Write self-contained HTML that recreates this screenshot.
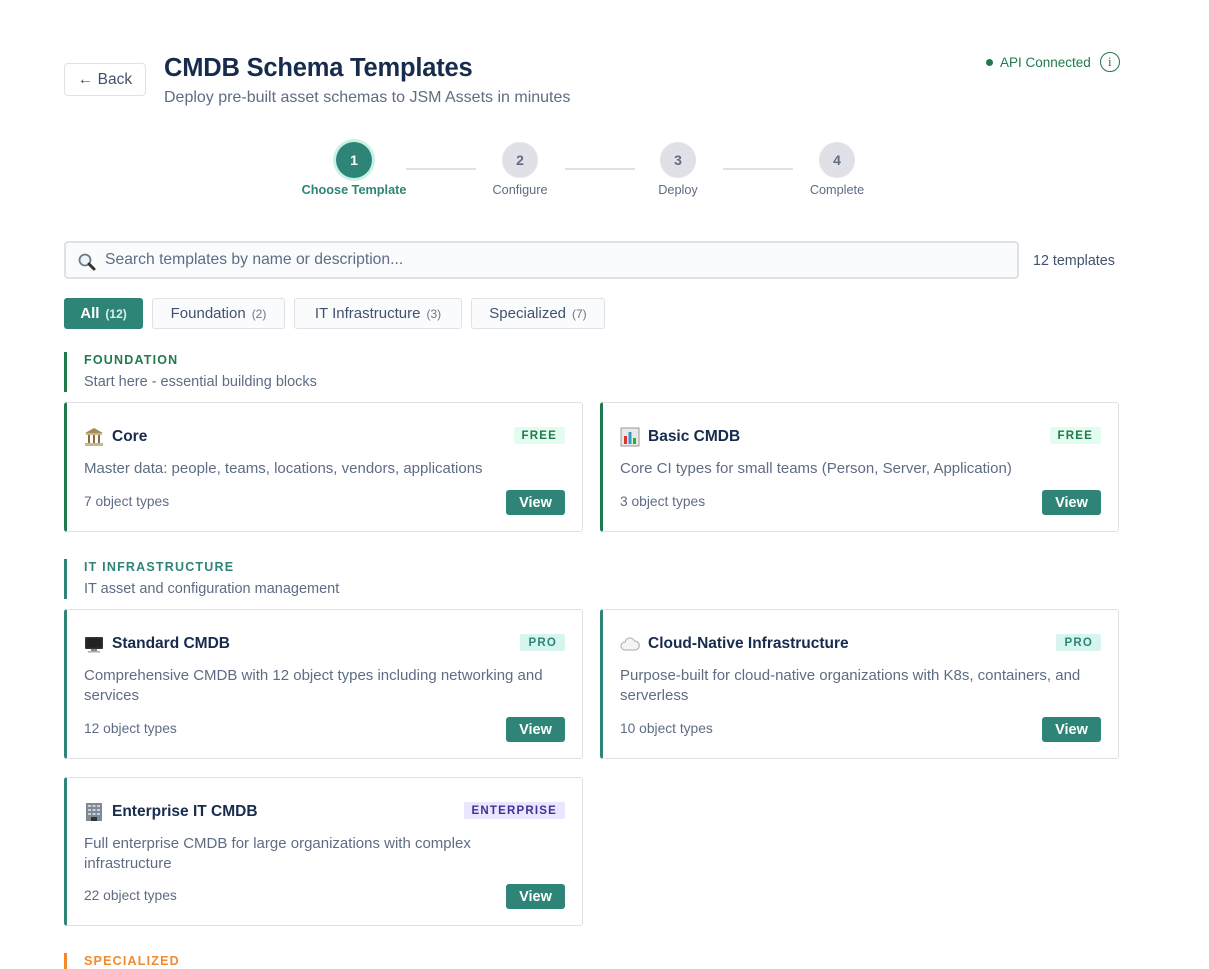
<!DOCTYPE html>
<html><head><meta charset="utf-8"><style>
*{box-sizing:border-box;margin:0;padding:0}
body{width:1209px;height:968px;overflow:hidden;background:#fff;font-family:"Liberation Sans",sans-serif;color:#172b4d;position:relative}
.abs{position:absolute}
.back{left:64px;top:63px;width:82px;height:33px;border:1px solid #dfe1e6;border-radius:4px;font-size:15.5px;color:#42526e;display:flex;align-items:center;justify-content:center}
h1{position:absolute;left:164px;top:54px;font-size:25.5px;font-weight:bold;color:#172b4d;letter-spacing:-0.2px}
.sub{left:164px;top:89px;font-size:16px;color:#5e6c84}
.api{left:986px;top:52px;font-size:13.5px;color:#1f7a4d;display:flex;align-items:center;gap:7px}
.dot{width:7px;height:7px;border-radius:50%;background:#1f7a4d}
.info{width:20px;height:20px;border:1.3px solid #1f7a4d;border-radius:50%;font-size:13px;display:flex;align-items:center;justify-content:center;margin-left:2px;font-family:"Liberation Serif",serif}
.step{position:absolute;top:142px;width:36px;height:36px;border-radius:50%;background:#dfe1e6;color:#5e6c84;font-size:14px;font-weight:bold;display:flex;align-items:center;justify-content:center}
.step.on{background:#2e8577;color:#fff;box-shadow:0 0 0 3px #c9f2e6}
.sl{position:absolute;top:183px;font-size:12.7px;color:#5e6c84;width:140px;text-align:center;margin-left:-70px}
.line{position:absolute;top:168px;height:2px;background:#dfe1e6;width:70px}
.search{left:64px;top:241px;width:955px;height:38px;border:2px solid #dfe1e6;border-radius:4px;background:#fafbfc;font-size:15.7px;color:#5e6c84;display:flex;align-items:center;padding-left:39px}
.count{left:1033px;top:253px;font-size:14.3px;color:#42526e}
.tab{position:absolute;top:298px;height:31px;border:1px solid #dfe1e6;border-radius:3px;background:#fafbfc;font-size:15px;color:#42526e;display:flex;align-items:center;justify-content:center;gap:6px}
.tab small{font-size:12px;color:#6b778c}
.tab.on{background:#2e8577;border-color:#2e8577;color:#fff;font-weight:bold}
.tab.on small{color:#d8f0ea;font-weight:bold}
.sec{position:absolute;left:64px;border-left:3px solid;padding-left:17px}
.sec b{display:block;font-size:12.5px;letter-spacing:1.2px;line-height:16px}
.sec span{display:block;font-size:14.5px;color:#5e6c84;line-height:20px;margin-top:4px}
.card{position:absolute;width:519px;border:1px solid #dfe1e6;border-left:3px solid;border-radius:3px;background:#fff}
.ct{position:absolute;left:17px;top:24px;font-size:15.5px;font-weight:bold;color:#172b4d;display:flex;align-items:center;gap:8px}
.badge{position:absolute;right:17px;top:24px;height:17px;font-size:11.5px;font-weight:bold;letter-spacing:1.2px;padding:0 8px;display:flex;align-items:center;border-radius:2px}
.free{background:#e3fcef;color:#1f7a4d}
.pro{background:#d5f5ee;color:#2e8577}
.ent{background:#eae6ff;color:#403294}
.cd{position:absolute;left:17px;top:56px;width:480px;font-size:15px;color:#5e6c84;line-height:20px}
.cm{position:absolute;left:17px;bottom:22px;font-size:13.8px;color:#5e6c84}
.view{position:absolute;right:17px;bottom:16px;width:59px;height:25px;background:#2e8577;color:#fff;font-weight:bold;font-size:14.5px;border-radius:3px;display:flex;align-items:center;justify-content:center}
</style></head><body>
<div class="abs back">← Back</div>
<h1>CMDB Schema Templates</h1>
<div class="abs sub">Deploy pre-built asset schemas to JSM Assets in minutes</div>
<div class="abs api"><div class="dot"></div>API Connected<div class="info">i</div></div>

<div class="step on" style="left:336px">1</div>
<div class="step" style="left:502px">2</div>
<div class="step" style="left:660px">3</div>
<div class="step" style="left:819px">4</div>
<div class="line" style="left:406px"></div>
<div class="line" style="left:565px"></div>
<div class="line" style="left:723px"></div>
<div class="sl" style="left:354px;color:#2e8577;font-weight:bold">Choose Template</div>
<div class="sl" style="left:520px">Configure</div>
<div class="sl" style="left:678px">Deploy</div>
<div class="sl" style="left:837px">Complete</div>

<div class="abs search"><svg class="abs" style="left:11px;top:9px" width="20" height="20" viewBox="0 0 20 20"><circle cx="8" cy="8" r="5.5" fill="#eef3f8" stroke="#6b778c" stroke-width="1.8"/><path d="M12 12l5 5" stroke="#333" stroke-width="3" stroke-linecap="round"/></svg>Search templates by name or description...</div>
<div class="abs count">12 templates</div>

<div class="tab on" style="left:64px;width:79px">All <small>(12)</small></div>
<div class="tab" style="left:152px;width:133px">Foundation <small>(2)</small></div>
<div class="tab" style="left:294px;width:168px">IT Infrastructure <small>(3)</small></div>
<div class="tab" style="left:471px;width:134px">Specialized <small>(7)</small></div>

<div class="sec" style="top:352px;border-color:#1f7a4d"><b style="color:#1f7a4d">FOUNDATION</b><span>Start here - essential building blocks</span></div>

<div class="card" style="left:64px;top:402px;height:130px;border-left-color:#1f7a4d">
<div class="ct"><svg width="20" height="20" viewBox="0 0 20 20"><path d="M1 6L10 1l9 5z" fill="#a68a5b"/><rect x="2" y="6" width="16" height="2" fill="#c8b68e"/><rect x="4" y="8" width="2" height="8" fill="#8a6d3b"/><rect x="9" y="8" width="2" height="8" fill="#8a6d3b"/><rect x="14" y="8" width="2" height="8" fill="#8a6d3b"/><rect x="1" y="16" width="18" height="3" fill="#c8b68e"/></svg>Core</div>
<div class="badge free">FREE</div>
<div class="cd">Master data: people, teams, locations, vendors, applications</div>
<div class="cm">7 object types</div><div class="view">View</div></div>

<div class="card" style="left:600px;top:402px;height:130px;border-left-color:#1f7a4d">
<div class="ct"><svg width="20" height="20" viewBox="0 0 20 20"><rect x="1" y="1" width="18" height="18" fill="#e8e8e8" stroke="#999"/><rect x="4" y="9" width="3" height="8" fill="#d33"/><rect x="8.5" y="5" width="3" height="12" fill="#39c"/><rect x="13" y="11" width="3" height="6" fill="#3a3"/></svg>Basic CMDB</div>
<div class="badge free">FREE</div>
<div class="cd">Core CI types for small teams (Person, Server, Application)</div>
<div class="cm">3 object types</div><div class="view">View</div></div>

<div class="sec" style="top:559px;border-color:#2e8577"><b style="color:#2e8577">IT INFRASTRUCTURE</b><span>IT asset and configuration management</span></div>

<div class="card" style="left:64px;top:609px;height:150px;border-left-color:#2e8577">
<div class="ct"><svg width="20" height="20" viewBox="0 0 20 20"><rect x="1" y="3" width="18" height="12" rx="1" fill="#333"/><rect x="2.5" y="4.5" width="15" height="9" fill="#222"/><rect x="7" y="15" width="6" height="2" fill="#888"/><rect x="4" y="17" width="12" height="1.5" fill="#aaa"/></svg>Standard CMDB</div>
<div class="badge pro">PRO</div>
<div class="cd">Comprehensive CMDB with 12 object types including networking and services</div>
<div class="cm">12 object types</div><div class="view">View</div></div>

<div class="card" style="left:600px;top:609px;height:150px;border-left-color:#2e8577">
<div class="ct"><svg width="20" height="20" viewBox="0 0 20 20"><path d="M5 16a4 4 0 010-8 5 5 0 019.5-1A4.5 4.5 0 0115 16z" fill="#f4f4f4" stroke="#aaa"/></svg>Cloud-Native Infrastructure</div>
<div class="badge pro">PRO</div>
<div class="cd">Purpose-built for cloud-native organizations with K8s, containers, and serverless</div>
<div class="cm">10 object types</div><div class="view">View</div></div>

<div class="card" style="left:64px;top:777px;height:149px;border-left-color:#2e8577">
<div class="ct"><svg width="20" height="20" viewBox="0 0 20 20"><rect x="2" y="1" width="16" height="18" fill="#7d8a96"/><g fill="#c9d3dc"><rect x="4" y="3" width="3" height="2"/><rect x="8.5" y="3" width="3" height="2"/><rect x="13" y="3" width="3" height="2"/><rect x="4" y="7" width="3" height="2"/><rect x="8.5" y="7" width="3" height="2"/><rect x="13" y="7" width="3" height="2"/><rect x="4" y="11" width="3" height="2"/><rect x="8.5" y="11" width="3" height="2"/><rect x="13" y="11" width="3" height="2"/></g><rect x="7" y="15" width="6" height="4" fill="#333"/></svg>Enterprise IT CMDB</div>
<div class="badge ent">ENTERPRISE</div>
<div class="cd" style="width:420px">Full enterprise CMDB for large organizations with complex infrastructure</div>
<div class="cm">22 object types</div><div class="view">View</div></div>

<div class="sec" style="top:953px;border-color:#f18a2e"><b style="color:#f18a2e">SPECIALIZED</b></div>
</body></html>
